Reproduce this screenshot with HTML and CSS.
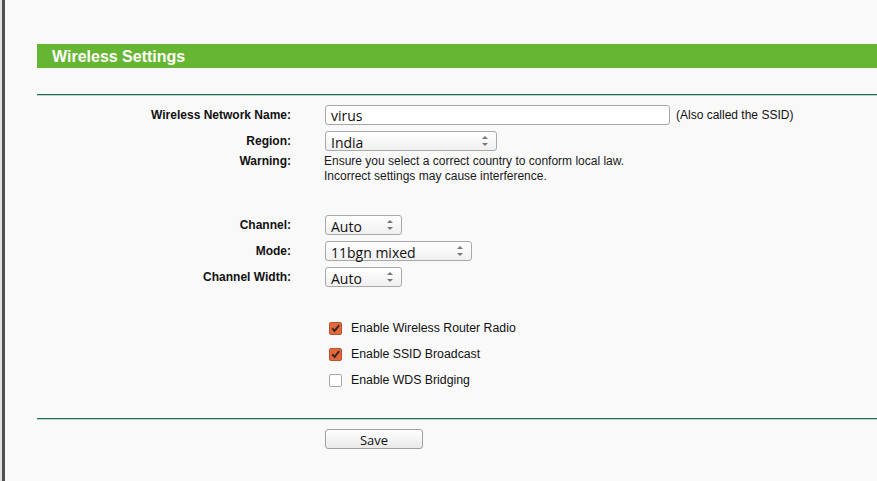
FILE: index.html
```html
<!DOCTYPE html>
<html lang="en">
<head>
  <meta charset="UTF-8">
  <title>Wireless Settings</title>
  <link rel="stylesheet" href="styles.css">
</head>
<body>
  <div class="frame">
    <div class="panel">
      <div class="title">Wireless Settings</div>
      <div class="rule"></div>

      <div class="form">
        <div class="row first">
          <label class="label" for="ssid">Wireless Network Name:</label>
          <div class="field">
            <input type="text" id="ssid" class="text-input" value="virus">
            <span class="hint">(Also called the SSID)</span>
          </div>
        </div>

        <div class="row">
          <label class="label">Region:</label>
          <div class="field">
            <span class="select region">India</span>
          </div>
        </div>

        <div class="row warning">
          <span class="label">Warning:</span>
          <div class="note">
            Ensure you select a correct country to conform local law.<br>
            Incorrect settings may cause interference.
          </div>
        </div>

        <div class="row channel">
          <label class="label">Channel:</label>
          <div class="field"><span class="select short">Auto</span></div>
        </div>

        <div class="row">
          <label class="label">Mode:</label>
          <div class="field"><span class="select mode">11bgn mixed</span></div>
        </div>

        <div class="row">
          <label class="label">Channel Width:</label>
          <div class="field"><span class="select short">Auto</span></div>
        </div>

        <div class="row checks">
          <span></span>
          <label class="check-item"><span class="box checked"><svg viewBox="0 0 12 12"><path d="M2.3 5.8 L5 8.6 L10 2.4" /></svg></span>Enable Wireless Router Radio</label>
        </div>
        <div class="row">
          <span></span>
          <label class="check-item"><span class="box checked"><svg viewBox="0 0 12 12"><path d="M2.3 5.8 L5 8.6 L10 2.4" /></svg></span>Enable SSID Broadcast</label>
        </div>
        <div class="row">
          <span></span>
          <label class="check-item"><span class="box"></span>Enable WDS Bridging</label>
        </div>
      </div>

      <div class="rule bottom"></div>

      <div class="actions">
        <button class="btn">Save</button>
      </div>
    </div>
  </div>
</body>
</html>
```

FILE: styles.css
```css
html {
  background-color: #e2e2e2;
}

body {
  margin: 0;
  padding-left: 2px;
  font-family: "Liberation Sans", Arial, sans-serif;
  font-size: 12px;
  color: #111;
  overflow: hidden;
}

.frame {
  border-left: 3px solid #505050;
  background: #f9f9f9;
  height: 481px;
  padding-top: 44px;
  box-sizing: border-box;
}

.panel {
  margin-left: 32px;
}

.title {
  background: #67b633;
  color: #fff;
  font-weight: bold;
  font-size: 16px;
  height: 24px;
  line-height: 26px;
  padding-left: 15px;
  overflow: hidden;
}

.rule {
  margin-top: 26px;
  border-top: 1px solid #2b6a55;
  border-bottom: 1px solid #a9dcc7;
}

.rule.bottom {
  margin-top: 25px;
}

.row {
  display: grid;
  grid-template-columns: 254px 1fr;
  column-gap: 33px;
  align-items: center;
  height: 26px;
}

.row.first {
  margin-top: 6px;
}

.label {
  text-align: right;
  font-weight: bold;
}

.field {
  display: flex;
  align-items: center;
}

.text-input {
  margin: 0 0 0 1px;
  width: 345px;
  height: 20px;
  box-sizing: border-box;
  border: 1px solid #a6a6a6;
  border-radius: 3px;
  background: #fff;
  padding: 1px 5px 0;
  font-family: "Open Sans", sans-serif;
  font-size: 14px;
  color: #111;
}

.hint {
  margin-left: 6px;
}

.select {
  position: relative;
  display: block;
  margin-left: 1px;
  height: 20px;
  box-sizing: border-box;
  border: 1px solid #a9a9a9;
  border-radius: 3px;
  background: linear-gradient(#ffffff, #f0f0f0);
  padding: 2px 0 0 5px;
  font-family: "Open Sans", sans-serif;
  font-size: 14px;
  line-height: 18px;
  color: #111;
}

.select::before,
.select::after {
  content: "";
  position: absolute;
  right: 8px;
  border-left: 3px solid transparent;
  border-right: 3px solid transparent;
}

.select::before {
  top: 4px;
  border-bottom: 3px solid #777;
}

.select::after {
  bottom: 4px;
  border-top: 3px solid #777;
}

.region { width: 172px; }
.short { width: 77px; }
.mode { width: 147px; }

.row.warning {
  height: 30px;
  align-items: start;
}

.warning .label {
  line-height: 15px;
}

.note {
  line-height: 15px;
  color: #1a1a1a;
}

.row.channel {
  margin-top: 28px;
}

.row.checks {
  margin-top: 25px;
}

.check-item {
  display: flex;
  align-items: center;
  margin-left: 5px;
  font-size: 12.3px;
}

.box {
  display: inline-flex;
  align-items: center;
  justify-content: center;
  width: 13px;
  height: 13px;
  box-sizing: border-box;
  border: 1px solid #a8a8a8;
  border-radius: 2px;
  background: #fff;
  margin-right: 9px;
}

.box.checked {
  background: #e4683b;
  border-color: #b9532c;
}

.box svg {
  width: 11px;
  height: 11px;
  fill: none;
  stroke: #3a2a22;
  stroke-width: 2.2;
}

.actions {
  padding: 9px 0 0 288px;
}

.btn {
  width: 98px;
  height: 20px;
  border: 1px solid #a0a0a0;
  border-radius: 3px;
  background: linear-gradient(#ffffff, #e9e9e9);
  font-family: "Open Sans", sans-serif;
  font-size: 13px;
  color: #111;
  padding: 1px 0 0;
  line-height: 18px;
}
```
